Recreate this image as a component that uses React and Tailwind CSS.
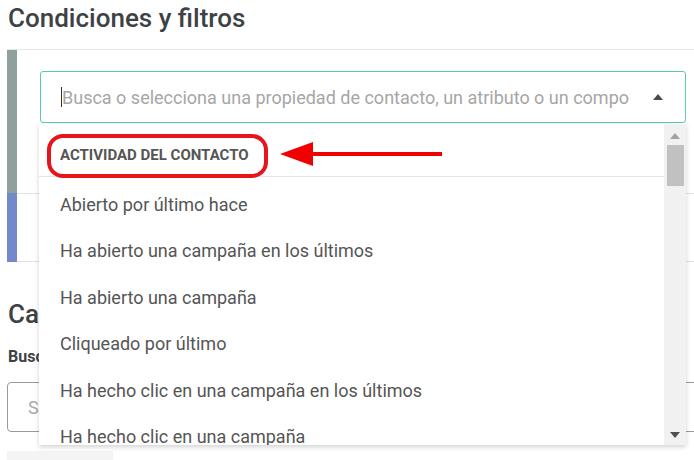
import { useState } from 'react';

const items = [
    'Abierto por último hace',
    'Ha abierto una campaña en los últimos',
    'Ha abierto una campaña',
    'Cliqueado por último',
    'Ha hecho clic en una campaña en los últimos',
    'Ha hecho clic en una campaña',
    'Ha recibido una campaña',
];

const Caret = ({ up, className }) => (
    <svg width="10" height="6" viewBox="0 0 10 6" className={className}>
        <path d={up ? 'M0 6 L5 0 L10 6 Z' : 'M0 0 L5 6 L10 0 Z'} fill="currentColor" />
    </svg>
);

const Dropdown = () => (
    <div className="absolute left-[39px] top-[124px] w-[647px] h-[321px] bg-white shadow-[0_2px_5px_rgba(0,0,0,0.18)] flex">
        <div className="flex-1 overflow-hidden">
            <div className="relative h-[53px] flex items-center pl-[21px] border-b border-[#e5e5e5]">
                <span className="text-[15px] font-bold text-[#555] pt-[10px]">ACTIVIDAD DEL CONTACTO</span>
                {/* red highlight */}
                <div className="absolute left-[8px] top-[10px] w-[221px] h-[44px] border-[4px] border-[#e8141c] rounded-[16px]" />
                <svg className="absolute left-[241px] top-[17px]" width="162" height="26" viewBox="0 0 162 26">
                    <path d="M0 13 L33 1 L33 25 Z" fill="#f00000" />
                    <rect x="30" y="11" width="132" height="4" fill="#f00000" />
                </svg>
            </div>
            <div className="pt-[4px]">
                {items.map((item) => (
                    <div key={item} className="h-[46.5px] flex items-center pl-[21px] text-[18px] text-[#555]">
                        {item}
                    </div>
                ))}
            </div>
        </div>
        <div className="w-[22px] bg-[#f1f1f1] flex flex-col items-center">
            <Caret up className="mt-[9px] text-[#a3a3a3]" />
            <div className="mt-[6px] w-[17px] h-[41px] bg-[#c1c1c1]" />
            <div className="flex-1" />
            <Caret className="mb-[7px] text-[#505050]" />
        </div>
    </div>
);

export default function App() {
    const [value] = useState('');

    return (
        <div className="relative w-[694px] h-[460px] overflow-hidden bg-white font-['Roboto',sans-serif]">
            <h2 className="pl-[8px] pt-[2px] text-[26px] leading-[32px] font-medium text-[#3d4246]">Condiciones y filtros</h2>

            <div className="mt-[15px] ml-[7px] flex border-t border-[#e8e8e8]">
                <div className="w-[10px] flex flex-col">
                    <div className="h-[143px] bg-[#8fa09d]" />
                    <div className="h-[69px] bg-[#7489cc]" />
                </div>
                <div className="flex-1">
                    <div className="h-[143px] pt-[21px] pl-[23px] pr-[8px]">
                        <div className="h-[52px] border border-[#56cdb2] rounded-[3px] flex items-center pl-[20px] pr-[22px]">
                            <div className="w-[1px] h-[20px] bg-[#333]" />
                            <input
                                value={value}
                                readOnly
                                placeholder="Busca o selecciona una propiedad de contacto, un atributo o un compo"
                                className="flex-1 min-w-0 text-[18px] text-[#333] placeholder:text-[#a6a6a6] outline-none bg-transparent"
                            />
                            <Caret up className="text-[#4a4a4a]" />
                        </div>
                    </div>
                    <div className="h-[69px] border-t border-b border-[#e2e2e2]" />
                </div>
            </div>

            <div className="pl-[8px] pt-[36px]">
                <h3 className="text-[26px] leading-[32px] font-medium text-[#3d4246]">Campos</h3>
                <p className="mt-[15px] text-[16px] font-bold text-[#3d4246]">Buscar</p>
            </div>
            <div className="mt-[13px] ml-[7px] h-[50px] w-[720px] border border-[#9a9a9a] rounded-[4px] flex items-center pl-[20px] text-[18px] text-[#aaa]">
                Selecciona
            </div>
            <div className="mt-[19px] ml-[7px] h-[20px] w-[106px] bg-[#f4f4f4]" />

            <Dropdown />
        </div>
    );
}
